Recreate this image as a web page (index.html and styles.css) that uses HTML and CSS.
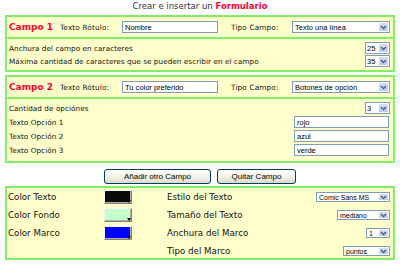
FILE: index.html
```html
<!DOCTYPE html>
<html lang="es">
<head>
<meta charset="utf-8">
<title>Crear e insertar un Formulario</title>
<link rel="stylesheet" href="styles.css">
</head>
<body>
<div class="title">Crear e insertar un <b>Formulario</b></div>

<section class="box b1">
  <div class="head">
    <span class="campo">Campo 1</span>
    <span class="hl">Texto Rótulo:</span>
    <input class="inp wide" value="Nombre" readonly>
    <span class="hl tipo">Tipo Campo:</span>
    <span class="sel big"><span class="val">Texto una línea</span><span class="arr"><svg width="7" height="5" viewBox="0 0 7 5"><path d="M1 1 L3.5 3.5 L6 1" fill="none" stroke="#4d6185" stroke-width="1.5"/></svg></span></span>
  </div>
  <div class="body">
    <div class="row"><span>Anchura del campo en caracteres</span><span class="sel num"><span class="val">25</span><span class="arr"><svg width="7" height="5" viewBox="0 0 7 5"><path d="M1 1 L3.5 3.5 L6 1" fill="none" stroke="#4d6185" stroke-width="1.5"/></svg></span></span></div>
    <div class="row"><span>Máxima cantidad de caracteres que se pueden escribir en el campo</span><span class="sel num"><span class="val">35</span><span class="arr"><svg width="7" height="5" viewBox="0 0 7 5"><path d="M1 1 L3.5 3.5 L6 1" fill="none" stroke="#4d6185" stroke-width="1.5"/></svg></span></span></div>
  </div>
</section>

<section class="box b2">
  <div class="head">
    <span class="campo">Campo 2</span>
    <span class="hl">Texto Rótulo:</span>
    <input class="inp wide" value="Tu color preferido" readonly>
    <span class="hl tipo">Tipo Campo:</span>
    <span class="sel big"><span class="val">Botones de opción</span><span class="arr"><svg width="7" height="5" viewBox="0 0 7 5"><path d="M1 1 L3.5 3.5 L6 1" fill="none" stroke="#4d6185" stroke-width="1.5"/></svg></span></span>
  </div>
  <div class="body">
    <div class="row"><span>Cantidad de opciónes</span><span class="sel num"><span class="val">3</span><span class="arr"><svg width="7" height="5" viewBox="0 0 7 5"><path d="M1 1 L3.5 3.5 L6 1" fill="none" stroke="#4d6185" stroke-width="1.5"/></svg></span></span></div>
    <div class="row"><span>Texto Opción 1</span><input class="inp opt" value="rojo" readonly></div>
    <div class="row"><span>Texto Opción 2</span><input class="inp opt" value="azul" readonly></div>
    <div class="row"><span>Texto Opción 3</span><input class="inp opt" value="verde" readonly></div>
  </div>
</section>

<div class="buttons">
  <button class="btn add">Añadir otro Campo</button>
  <button class="btn del">Quitar Campo</button>
</div>

<section class="box b3">
  <div class="grid">
    <span>Color Texto</span>
    <span class="swatch black"><i></i></span>
    <span class="lab2">Estilo del Texto</span>
    <span class="sel s3 w-font"><span class="val">Comic Sans MS</span><span class="arr"><svg width="7" height="5" viewBox="0 0 7 5"><path d="M1 1 L3.5 3.5 L6 1" fill="none" stroke="#4d6185" stroke-width="1.5"/></svg></span></span>

    <span>Color Fondo</span>
    <span class="swatch green"><i></i></span>
    <span class="lab2">Tamaño del Texto</span>
    <span class="sel s3 w-size"><span class="val">mediano</span><span class="arr"><svg width="7" height="5" viewBox="0 0 7 5"><path d="M1 1 L3.5 3.5 L6 1" fill="none" stroke="#4d6185" stroke-width="1.5"/></svg></span></span>

    <span>Color Marco</span>
    <span class="swatch blue"><i></i></span>
    <span class="lab2">Anchura del Marco</span>
    <span class="sel s3 w-one"><span class="val">1</span><span class="arr"><svg width="7" height="5" viewBox="0 0 7 5"><path d="M1 1 L3.5 3.5 L6 1" fill="none" stroke="#4d6185" stroke-width="1.5"/></svg></span></span>

    <span></span>
    <span></span>
    <span class="lab2">Tipo del Marco</span>
    <span class="sel s3 w-pts"><span class="val">puntos</span><span class="arr"><svg width="7" height="5" viewBox="0 0 7 5"><path d="M1 1 L3.5 3.5 L6 1" fill="none" stroke="#4d6185" stroke-width="1.5"/></svg></span></span>
  </div>
</section>
</body>
</html>
```

FILE: styles.css
```css
body {
  margin: 0;
  width: 400px;
  background: #fff;
  color: #111;
  font-family: "DejaVu Sans", Verdana, sans-serif;
}

.title {
  height: 13px;
  line-height: 13px;
  text-align: center;
  font-size: 8.5px;
  color: #333;
}
.title b {
  color: #ff0033;
}

.box {
  margin: 0 5px;
  border: 2px solid #80ee66;
  background: #ffffcc;
}
.b1 { margin-top: 2px; }
.b2 { margin-top: 3px; }
.b3 { margin-top: 2px; }

.head {
  display: flex;
  align-items: center;
  height: 20px;
  padding-left: 2px;
  border-bottom: 2px solid #80ee66;
}
.campo {
  width: 51px;
  font-weight: bold;
  font-size: 9px;
  color: #ff0033;
}
.hl {
  width: 62px;
  font-size: 7.3px;
  letter-spacing: 0.15px;
  color: #111;
}
.tipo {
  margin-left: 13px;
  width: 61px;
}

.inp {
  box-sizing: border-box;
  height: 12px;
  margin: 0;
  padding: 0 2px;
  border: 1px solid #7f9db9;
  background: #fff;
  font-family: "Liberation Sans", Arial, sans-serif;
  font-size: 7.5px;
  color: #000;
  outline: none;
}
.wide { width: 96px; }
.opt { width: 95px; margin-right: 1px; }

.sel {
  box-sizing: border-box;
  display: flex;
  align-items: stretch;
  height: 12px;
  border: 1px solid #7f9db9;
  background: #fff;
  font-family: "Liberation Sans", Arial, sans-serif;
  font-size: 7.5px;
  color: #000;
}
.sel .val {
  flex: 1;
  display: flex;
  align-items: center;
  padding-left: 2px;
  white-space: nowrap;
  overflow: hidden;
}
.sel .arr {
  box-sizing: border-box;
  width: 11px;
  flex: none;
  display: flex;
  align-items: center;
  justify-content: center;
  border: 1px solid #fff;
  background: linear-gradient(#d4e0fb, #b9cbf3);
}
.big { width: 98px; }
.num { width: 25px; }
.num .val { padding-left: 1px; }

.body {
  display: flex;
  flex-direction: column;
  padding: 3px 3px 3px 2px;
  gap: 1px;
}
.b2 .body {
  gap: 2px;
  padding-bottom: 5px;
}
.row {
  display: flex;
  align-items: center;
  justify-content: space-between;
  height: 12px;
  font-size: 7.25px;
  letter-spacing: 0.05px;
}

.buttons {
  display: flex;
  justify-content: center;
  gap: 6px;
  margin-top: 6px;
}
.btn {
  box-sizing: border-box;
  height: 15px;
  margin: 0;
  padding: 0;
  border: 1px solid #003c74;
  border-radius: 3px;
  background: linear-gradient(#ffffff, #f0efe6 60%, #dcd8c8);
  font-family: "Liberation Sans", Arial, sans-serif;
  font-size: 8px;
  color: #000;
}
.add { width: 107px; }
.del { width: 79px; }

.grid {
  display: grid;
  grid-template-columns: 96px 28px 1fr auto;
  grid-auto-rows: 14px;
  row-gap: 4px;
  align-items: center;
  padding: 2px 3px 0 1px;
  font-size: 8.7px;
  color: #111;
}
.lab2 { margin-left: 35px; }

.swatch {
  position: relative;
  box-sizing: border-box;
  height: 14px;
  border: 1px solid;
  border-color: #f4f4f4 #808080 #808080 #f4f4f4;
  box-shadow: inset -1px -1px 0 #b0b0b0;
}
.swatch i {
  position: absolute;
  right: 0;
  bottom: 0;
  width: 0;
  height: 0;
  border-left: 2.5px solid transparent;
  border-right: 2.5px solid transparent;
  border-top: 3px solid #000;
}
.black { background: #0a0a0a; }
.green { background: #c4ffcc; }
.blue { background: #0000ff; }

.s3 {
  height: 10px;
  justify-self: end;
  font-size: 7px;
}
.w-font { width: 74px; }
.w-size { width: 53px; }
.w-one { width: 24px; }
.w-pts { width: 47px; }
```
